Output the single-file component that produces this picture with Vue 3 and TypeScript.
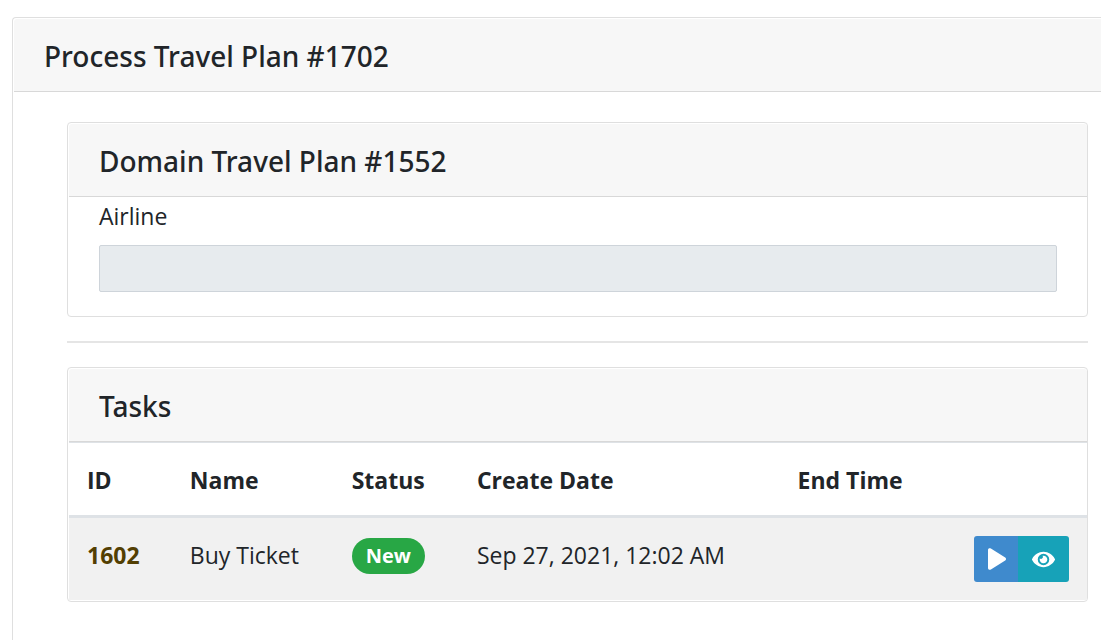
<script setup lang="ts">
interface Task {
  id: number
  name: string
  status: string
  created: string
  ended: string
}

const processId = 1702
const domainId = 1552
const columns: string[] = ['ID', 'Name', 'Status', 'Create Date', 'End Time']
const tasks: Task[] = [
  { id: 1602, name: 'Buy Ticket', status: 'New', created: 'Sep 27, 2021, 12:02 AM', ended: '' },
]
</script>

<template>
  <main class="page">
    <section class="card process">
      <h4 class="card-header">Process Travel Plan #{{ processId }}</h4>
      <div class="process-body">
        <section class="card">
          <h4 class="card-header">Domain Travel Plan #{{ domainId }}</h4>
          <div class="form">
            <label for="airline">Airline</label>
            <input id="airline" class="field" type="text" disabled />
          </div>
        </section>
        <hr class="divider" />
        <section class="card">
          <h4 class="card-header">Tasks</h4>
          <table class="tasks">
            <colgroup>
              <col class="c-id" />
              <col class="c-name" />
              <col class="c-status" />
              <col class="c-created" />
              <col />
              <col class="c-actions" />
            </colgroup>
            <thead>
              <tr>
                <th v-for="column in columns" :key="column" scope="col">{{ column }}</th>
                <td></td>
              </tr>
            </thead>
            <tbody>
              <tr v-for="task in tasks" :key="task.id">
                <td><a class="task-link" href="#">{{ task.id }}</a></td>
                <td>{{ task.name }}</td>
                <td><span class="badge">{{ task.status }}</span></td>
                <td>{{ task.created }}</td>
                <td>{{ task.ended }}</td>
                <td>
                  <div class="actions">
                    <button class="btn run" type="button" aria-label="Run task">
                      <svg width="18" height="22" viewBox="0 0 18 22" aria-hidden="true">
                        <path fill="currentColor" d="M0 2C0 .3 1.500-.3 2.900.500L17.200 9.500c1.100.700 1.100 2.200 0 2.900L2.900 21.400C1.500 22.300 0 21.600 0 20z" />
                      </svg>
                    </button>
                    <button class="btn view" type="button" aria-label="View task">
                      <svg width="23" height="21" viewBox="0 0 576 512" aria-hidden="true">
                        <path fill="currentColor" d="M572.520 241.400C518.290 135.590 410.930 64 288 64S57.680 135.640 3.480 241.410a32.350 32.350 0 0 0 0 29.190C57.710 376.410 165.070 448 288 448s230.320-71.640 284.520-177.410a32.350 32.350 0 0 0 0-29.190zM288 400a144 144 0 1 1 144-144 143.930 143.930 0 0 1-144 144zm0-240a95.310 95.310 0 0 0-25.310 3.790 47.850 47.850 0 0 1-66.900 66.900A95.780 95.780 0 1 0 288 160z" />
                      </svg>
                    </button>
                  </div>
                </td>
              </tr>
            </tbody>
          </table>
        </section>
      </div>
    </section>
  </main>
</template>

<style>
body {
  margin: 0;
  background: #fff;
}
</style>

<style scoped>
* {
  box-sizing: border-box;
}

.page {
  height: 100vh;
  padding: 17px 0 0 12px;
  overflow: hidden;
  color: #212529;
  font-family: "Segoe UI", "Open Sans", "Noto Sans", sans-serif;
  font-size: 23px;
  line-height: 36px;
}

.card {
  padding: 1px 0 1px 1px;
  border: 1px solid #dfdfdf;
  border-radius: 4px;
  background: #fff;
}

.process {
  min-height: 100vh;
  border-right: 0;
  border-radius: 4px 0 0 0;
}

.card-header {
  margin: 0;
  padding: 19px 30px 17px;
  border-bottom: 1px solid #d8d8d8;
  border-radius: 3px 3px 0 0;
  background: #f7f7f7;
  font-family: "Segoe UI", "Noto Sans", "Open Sans", sans-serif;
  font-size: 28px;
  font-weight: 500;
  line-height: 36px;
}

.process > .card-header {
  border-radius: 3px 0 0 0;
}

.process-body {
  padding: 30px 13px 30px 53px;
}

.form {
  padding: 1px 30px 23px;
}

.form label {
  display: block;
  margin-bottom: 11px;
}

.field {
  display: block;
  width: 100%;
  height: 47px;
  padding: 0 12px;
  border: 1px solid #ced4da;
  border-radius: 2px;
  background: #e7ebee;
  font: inherit;
}

.divider {
  height: 2px;
  margin: 24px 0;
  border: 0;
  background: #e5e5e5;
}

.tasks {
  width: 100%;
  border-collapse: separate;
  border-spacing: 0;
  table-layout: fixed;
}

.c-id {
  width: 10.1%;
}

.c-name {
  width: 15.9%;
}

.c-status {
  width: 12.3%;
}

.c-created {
  width: 31.5%;
}

.c-actions {
  width: 132px;
}

.tasks th,
.tasks td {
  padding: 19px 18px 17px;
  text-align: left;
  vertical-align: top;
  white-space: nowrap;
}

.tasks thead th,
.tasks thead td {
  border-top: 1px solid #dee2e6;
  border-bottom: 3px solid #dee2e6;
  font-weight: 700;
}

.tasks tbody tr {
  background: #f1f1f1;
}

.tasks tbody td:last-child {
  padding: 18px;
}

.task-link {
  color: #533f03;
  font-weight: 700;
  text-decoration: none;
}

.badge {
  display: inline-block;
  margin-top: 1px;
  padding: 0 14px;
  border-radius: 18px;
  background: #28a745;
  color: #fff;
  font-size: 20px;
  font-weight: 700;
  line-height: 36px;
  vertical-align: top;
}

.actions {
  display: flex;
  justify-content: flex-end;
}

.btn {
  display: flex;
  align-items: center;
  justify-content: center;
  height: 46px;
  padding: 0;
  border: 0;
  color: #fff;
  cursor: pointer;
}

.run {
  width: 44px;
  padding-left: 2px;
  border-radius: 3px 0 0 3px;
  background: #3f8acd;
}

.view {
  width: 51px;
  border-radius: 0 3px 3px 0;
  background: #17a2b8;
}
</style>
